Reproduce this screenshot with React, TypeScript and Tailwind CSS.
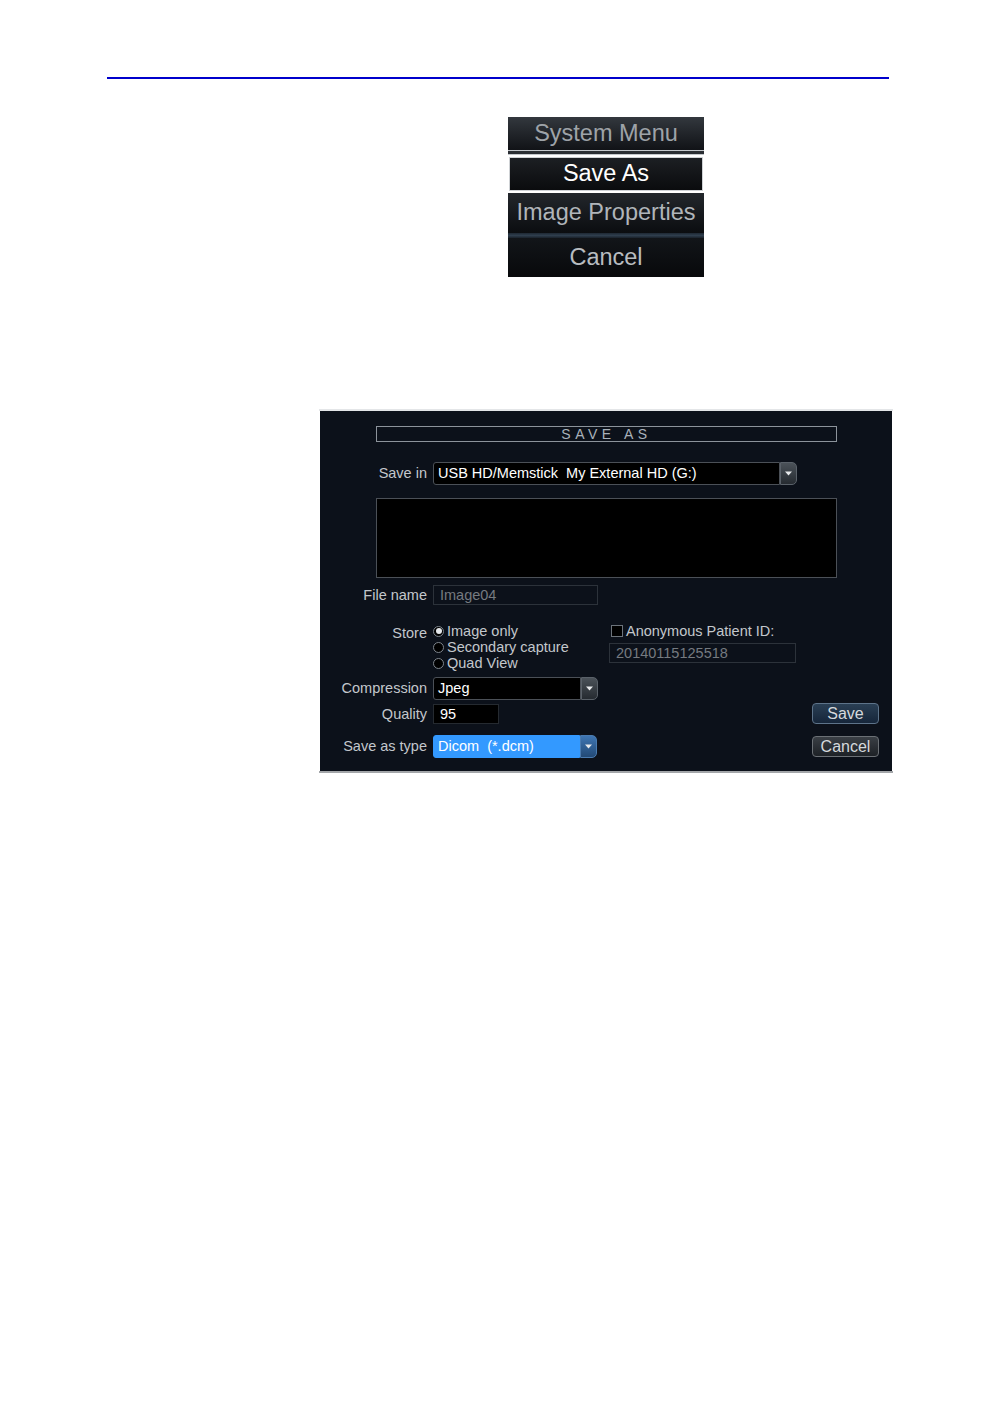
import React from 'react';

const font = { fontFamily: '"Liberation Sans", Arial, sans-serif' };

const Arrow: React.FC<{ blue?: boolean }> = ({ blue }) => (
  <div
    className={`w-[17px] h-full flex items-center justify-center rounded-r-[5px] border ${
      blue
        ? 'bg-gradient-to-b from-[#3f76b3] to-[#234a76] border-[#4a7bb0]'
        : 'bg-gradient-to-b from-[#4b5259] to-[#262b31] border-[#5a6169]'
    }`}
  >
    <svg width="7" height="5" viewBox="0 0 7 5">
      <path d="M0 0.5 H7 L3.5 4.5 Z" fill="#e8eaec" />
    </svg>
  </div>
);

const Dropdown: React.FC<{ value: string; width: string; blue?: boolean }> = ({ value, width, blue }) => (
  <div className={`flex h-[23px] ${width}`}>
    <div
      className={`flex-1 flex items-center pl-[4px] rounded-l-[3px] border whitespace-pre ${
        blue ? 'bg-[#3399ff] border-[#3399ff] text-white' : 'bg-black border-[#4b5057] text-white'
      }`}
    >
      {value}
    </div>
    <Arrow blue={blue} />
  </div>
);

const Label: React.FC<{ children: React.ReactNode }> = ({ children }) => (
  <div className="w-[107px] text-right text-[#c3c7cc] shrink-0">{children}</div>
);

const Radio: React.FC<{ checked?: boolean; label: string }> = ({ checked, label }) => (
  <div className="flex items-center h-[16px] gap-[3px]">
    <div className="w-[11px] h-[11px] rounded-full border border-[#7d848c] bg-black flex items-center justify-center">
      {checked && <div className="w-[6px] h-[6px] rounded-full bg-[#e5e7ea]" />}
    </div>
    <span className="text-[#c3c7cc]">{label}</span>
  </div>
);

const App: React.FC = () => {
  return (
    <div className="w-[996px] min-h-[1416px] bg-white pt-[77px]" style={font}>
      <div className="ml-[107px] w-[782px] h-[2px] bg-[#0000cc]" />

      {/* system menu */}
      <div className="ml-[508px] mt-[38px] w-[196px] text-[23.5px] leading-none">
        <div className="h-[33px] bg-gradient-to-b from-[#33383e] to-[#111317] flex items-center justify-center text-[#9ea3a8]">
          System Menu
        </div>
        <div className="h-[1px] bg-[#c3c7cb]" />
        <div className="h-[3px] bg-[#2a2e33]" />
        <div className="h-[1px] bg-[#c3c7cb]" />
        <div className="py-[2px] px-[1px] bg-white">
          <div className="h-[34px] border border-[#cfd2d5] bg-gradient-to-b from-[#1c1f23] to-[#0b0c0e] flex items-center justify-center text-white">
            Save As
          </div>
        </div>
        <div className="h-[40px] bg-gradient-to-b from-[#23272c] to-[#0b0d10] flex items-center justify-center text-[#b0b5ba]">
          Image Properties
        </div>
        <div className="h-[5px] bg-gradient-to-b from-[#1e2833] via-[#2f3e4d] to-[#1a222b]" />
        <div className="h-[39px] bg-gradient-to-b from-[#121519] to-[#08090b] flex items-center justify-center text-[#b8bcc0]">
          Cancel
        </div>
      </div>

      {/* save as dialog */}
      <div className="ml-[319px] mt-[132px] w-[574px] border-t-2 border-t-[#e4e6e8] border-b-2 border-b-[#a3a6a9] pl-[1px] pr-[1px] bg-white">
        <div className="bg-[#0c111a] text-[14.5px] leading-none pb-[13px]">
          <div className="pt-[15px] pl-[56px]">
            <div className="w-[461px] h-[16px] border border-[#8c939b] flex items-end justify-center text-[#a9b1ba] tracking-[4.5px] text-[14px] leading-[13px] overflow-hidden">
              SAVE&nbsp;AS
            </div>
          </div>

          <div className="mt-[20px] flex items-center gap-[6px]">
            <Label>Save in</Label>
            <Dropdown value="USB HD/Memstick  My External HD (G:)" width="w-[364px]" />
          </div>

          <div className="mt-[13px] ml-[56px] w-[461px] h-[80px] bg-black border border-[#4b5057]" />

          <div className="mt-[7px] flex items-center gap-[6px]">
            <Label>File name</Label>
            <div className="w-[165px] h-[20px] border border-[#2c323a] flex items-center pl-[6px] text-[#757a80]">
              Image04
            </div>
          </div>

          <div className="mt-[18px] flex">
            <div className="w-[289px] flex gap-[6px]">
              <Label>
                <div className="h-[16px] flex items-center justify-end pt-[4px]">Store</div>
              </Label>
              <div className="flex flex-col">
                <Radio checked label="Image only" />
                <Radio label="Secondary capture" />
                <Radio label="Quad View" />
              </div>
            </div>
            <div className="flex flex-col">
              <div className="flex items-center h-[16px] gap-[3px] pl-[2px]">
                <div className="w-[12px] h-[12px] bg-black border border-[#6c737b]" />
                <span className="text-[#c3c7cc]">Anonymous Patient ID:</span>
              </div>
              <div className="mt-[4px] w-[187px] h-[20px] border border-[#2c323a] flex items-center pl-[6px] text-[#757a80]">
                20140115125518
              </div>
            </div>
          </div>

          <div className="mt-[6px] flex">
            <div className="flex flex-col">
              <div className="flex items-center gap-[6px]">
                <Label>Compression</Label>
                <Dropdown value="Jpeg" width="w-[165px]" />
              </div>
              <div className="mt-[4px] flex items-center gap-[6px]">
                <Label>Quality</Label>
                <div className="w-[66px] h-[20px] bg-black border border-[#252a30] flex items-center pl-[6px] text-white">
                  95
                </div>
              </div>
              <div className="mt-[11px] flex items-center gap-[6px]">
                <Label>Save as type</Label>
                <Dropdown value="Dicom  (*.dcm)" width="w-[164px]" blue />
              </div>
            </div>
            <div className="ml-auto mr-[13px] mt-[26px] flex flex-col gap-[12px]">
              <div className="w-[67px] h-[21px] rounded-[4px] border border-[#5d7389] bg-gradient-to-b from-[#2a3f54] to-[#16263a] flex items-center justify-center text-[#d5d9dd] text-[16px]">
                Save
              </div>
              <div className="w-[67px] h-[21px] rounded-[4px] border border-[#6b7075] bg-gradient-to-b from-[#3a3f45] to-[#1d2126] flex items-center justify-center text-[#d5d9dd] text-[16px]">
                Cancel
              </div>
            </div>
          </div>
        </div>
      </div>
    </div>
  );
};

export default App;
